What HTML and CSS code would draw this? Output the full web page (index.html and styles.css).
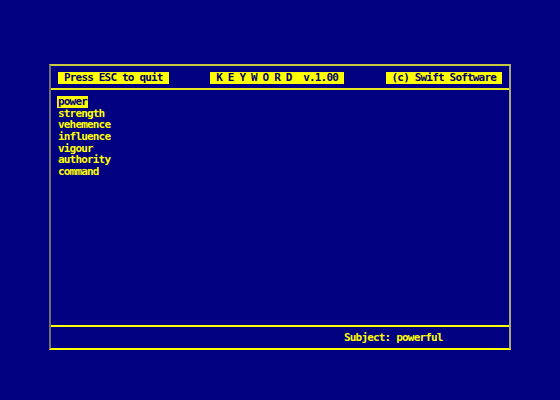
FILE: index.html
```html
<!DOCTYPE html>
<html>
<head>
<meta charset="utf-8">
<link rel="stylesheet" href="styles.css">
</head>
<body>
<div class="frame">
  <div class="header">
    <span class="label">Press ESC to quit</span>
    <span class="label">K E Y W O R D  v.1.00</span>
    <span class="label">(c) Swift Software</span>
  </div>
  <div class="content">
    <ul class="list">
      <li class="item selected">power</li>
      <li class="item">strength</li>
      <li class="item">vehemence</li>
      <li class="item">influence</li>
      <li class="item">vigour</li>
      <li class="item">authority</li>
      <li class="item">command</li>
    </ul>
  </div>
  <div class="footer">
    <span class="status">Subject: powerful</span>
  </div>
</div>
</body>
</html>
```
FILE: styles.css
```css
html, body {
  margin: 0;
  padding: 0;
  background: #000080;
}
body {
  padding: 64px 0 0 49px;
  font-family: "DejaVu Sans Mono", "Liberation Mono", monospace;
  font-weight: bold;
  font-size: 11px;
  letter-spacing: -0.82px;
  color: #ffff00;
}
.frame {
  width: 458px;
  height: 282px;
  border-style: solid;
  border-width: 2px;
  border-color: #c8c840 #a8a878 #ffff00 #707070;
  display: flex;
  flex-direction: column;
}
.header {
  height: 20px;
  padding: 2px 7px 0 7px;
  border-bottom: 2px solid #e8e820;
  display: flex;
  justify-content: space-between;
  align-items: center;
}
.label {
  background: #ffff00;
  color: #000070;
  line-height: 12px;
  height: 12px;
  padding: 0 6px 0 6px;
  white-space: pre;
}
.content {
  flex: 1;
  padding: 6px 7px 0 6px;
}
.list {
  list-style: none;
  margin: 0;
  padding: 0;
  display: flex;
  flex-direction: column;
  align-items: flex-start;
}
.item {
  line-height: 11.7px;
  height: 11.7px;
  padding: 0 1px;
}
.item.selected {
  background: #ffff00;
  color: #000080;
}
.footer {
  height: 21px;
  border-top: 2px solid #ffff00;
  display: flex;
  align-items: center;
  padding-left: 293px;
}
.status {
  line-height: 12px;
}
```
